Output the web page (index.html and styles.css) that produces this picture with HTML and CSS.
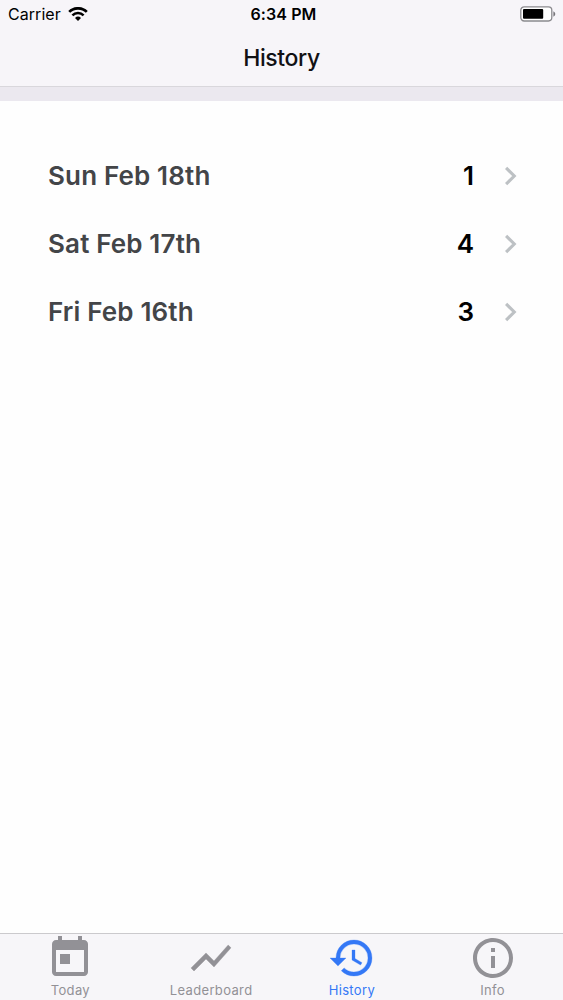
FILE: index.html
```html
<!DOCTYPE html>
<html lang="en">
<head>
    <meta charset="utf-8">
    <title>History</title>
    <link rel="stylesheet" href="styles.css">
</head>
<body>
<div class="app">
    <header class="header">
        <div class="status-bar">
            <div class="carrier">
                <span>Carrier</span>
                <svg class="wifi" viewBox="0 0 20 14">
                    <path d="M1.2 4.9a12.6 12.6 0 0 1 17.6 0" fill="none" stroke="#000" stroke-width="2.7"/>
                    <path d="M4.4 8.3a8 8 0 0 1 11.2 0" fill="none" stroke="#000" stroke-width="2.5"/>
                    <path d="M10 14l-3-3a4.3 4.3 0 0 1 6 0z"/>
                </svg>
            </div>
            <div class="time">6:34 PM</div>
            <div class="battery">
                <svg viewBox="0 0 36 16" width="36" height="16">
                    <rect x=".8" y=".8" width="31" height="14.2" rx="3.4" fill="#fff" stroke="#8b8a8e" stroke-width="1.3"/>
                    <rect x="3" y="3" width="20.2" height="9.8" rx="1"/>
                    <path d="M33.4 5.3q1.9 1 1.9 2.7t-1.9 2.7z" fill="#77767a"/>
                </svg>
            </div>
        </div>
        <h1 class="title">History</h1>
    </header>
    <main class="history">
        <div class="row">
            <span class="date">Sun Feb 18th</span>
            <span class="count">1</span>
            <svg class="chevron" viewBox="0 0 12 20"><path d="M1.1 1.8l8.2 8.2-8.2 8.2"/></svg>
        </div>
        <div class="row">
            <span class="date">Sat Feb 17th</span>
            <span class="count">4</span>
            <svg class="chevron" viewBox="0 0 12 20"><path d="M1.1 1.8l8.2 8.2-8.2 8.2"/></svg>
        </div>
        <div class="row">
            <span class="date">Fri Feb 16th</span>
            <span class="count">3</span>
            <svg class="chevron" viewBox="0 0 12 20"><path d="M1.1 1.8l8.2 8.2-8.2 8.2"/></svg>
        </div>
    </main>
    <nav class="tabs">
        <div class="tab">
            <svg viewBox="0 0 24 24"><path d="M19 3h-1V1h-2v2H8V1H6v2H5c-1.11 0-1.99.9-1.99 2L3 19c0 1.1.89 2 2 2h14c1.1 0 2-.9 2-2V5c0-1.1-.9-2-2-2zm0 16H5V8h14v11zM7 10h5v5H7z"/></svg>
            <span>Today</span>
        </div>
        <div class="tab">
            <svg viewBox="0 0 24 24"><path d="M3.5 18.49l6-6.01 4 4L22 6.92l-1.41-1.41-7.09 7.97-4-4L2 16.99z" stroke="currentColor" stroke-width=".2"/></svg>
            <span>Leaderboard</span>
        </div>
        <div class="tab active">
            <svg viewBox="0 0 24 24"><path d="M13 3a9 9 0 0 0-9 9H1l3.89 3.89.07.14L9 12H6a7 7 0 1 1 7 7c-1.93 0-3.68-.79-4.94-2.06l-1.42 1.42A8.954 8.954 0 0 0 13 21a9 9 0 0 0 0-18zm-1 5v5l4.28 2.54.72-1.21-3.5-2.08V8H12z" stroke="currentColor" stroke-width=".15"/></svg>
            <span>History</span>
        </div>
        <div class="tab">
            <svg viewBox="0 0 24 24"><path d="M11 17h2v-6h-2v6zm1-15C6.48 2 2 6.48 2 12s4.48 10 10 10 10-4.48 10-10S17.52 2 12 2zm0 18c-4.41 0-8-3.59-8-8s3.59-8 8-8 8 3.59 8 8-3.59 8-8 8zM11 9h2V7h-2v2z"/></svg>
            <span>Info</span>
        </div>
    </nav>
</div>
</body>
</html>
```
FILE: styles.css
```css
* {
    box-sizing: border-box;
}
body {
    margin: 0;
    font-family: Inter, "Liberation Sans", sans-serif;
    background-color: #fefefe;
}
.app {
    display: flex;
    flex-direction: column;
    height: 1000px;
    overflow: hidden;
}
.header {
    height: 101px;
    background-color: #f7f5f9;
    border-bottom: 14px solid #ebe8ef;
    box-shadow: inset 0 -1px 0 #d9d7dc;
}
.status-bar {
    display: grid;
    grid-template-columns: 1fr auto 1fr;
    align-items: center;
    height: 29px;
    padding: 0 7px 0 8px;
    color: #000;
}
.carrier {
    display: flex;
    align-items: center;
    gap: 7px;
    font-size: 16px;
    line-height: 18px;
    padding-bottom: 1px;
    letter-spacing: 0.05px;
}
.wifi {
    width: 20px;
    height: 14px;
}
.time {
    padding: 0 0 1px 3px;
    font-size: 16px;
    line-height: 18px;
    font-weight: 600;
    letter-spacing: 0.1px;
}
.battery {
    display: flex;
    justify-content: flex-end;
    padding-bottom: 1px;
}
.title {
    margin: 0;
    font-size: 23px;
    line-height: 58px;
    font-weight: 500;
    letter-spacing: -0.4px;
    text-align: center;
    color: #111114;
}
.history {
    flex: 1;
    padding: 41px 46px 0 48px;
}
.row {
    display: flex;
    align-items: center;
    height: 68px;
    font-size: 26px;
    font-weight: 600;
}
.date {
    flex: 1;
    padding-bottom: 2px;
    color: #434548;
    letter-spacing: 0.15px;
}
.count {
    padding-bottom: 2px;
    color: #000;
}
.chevron {
    width: 12px;
    height: 20px;
    margin-left: 31px;
    fill: none;
    stroke: #bdc1c4;
    stroke-width: 3.1;
}
.tabs {
    display: flex;
    height: 67px;
    background-color: #f7f6f9;
    border-top: 1px solid #cbcacd;
}
.tab {
    flex: 1;
    display: flex;
    flex-direction: column;
    align-items: center;
    color: #929196;
    font-size: 13px;
    line-height: 16px;
    letter-spacing: 0.35px;
}
.tab svg {
    width: 48px;
    height: 48px;
    fill: currentColor;
}
.active {
    color: #3478f6;
}
```
